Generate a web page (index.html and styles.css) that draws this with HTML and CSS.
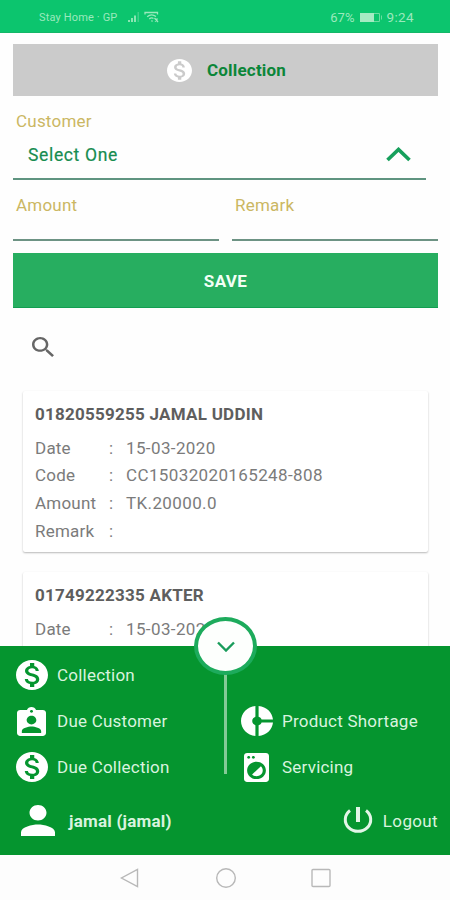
FILE: index.html
```html
<!DOCTYPE html>
<html lang="en">
<head>
<meta charset="utf-8">
<title>Collection</title>
<link rel="stylesheet" href="styles.css">
</head>
<body>
<svg class="defs" aria-hidden="true">
  <symbol id="money" viewBox="2 2 20 20" preserveAspectRatio="none"><path d="M12 2C6.480 2 2 6.480 2 12s4.480 10 10 10 10-4.480 10-10S17.520 2 12 2zm1.410 16.090V20h-2.670v-1.930c-1.710-.36-3.160-1.460-3.270-3.400h1.960c.1 1.050.82 1.870 2.650 1.870 1.960 0 2.400-.98 2.400-1.590 0-.83-.44-1.610-2.670-2.140-2.480-.6-4.180-1.620-4.180-3.670 0-1.720 1.390-2.840 3.110-3.210V4h2.670v1.950c1.860.45 2.790 1.860 2.850 3.390H14.300c-.05-1.110-.64-1.870-2.220-1.870-1.500 0-2.400.68-2.400 1.640 0 .84.65 1.390 2.670 1.910s4.180 1.390 4.180 3.910c-.01 1.830-1.380 2.830-3.120 3.160z"/></symbol>
</svg>
<header class="status">
  <span class="carrier">Stay Home · GP</span>
  <svg class="signal" viewBox="0 0 13 11"><path d="M1 8h2v2H1zM4 6h2v4H4zM7 3.500h2V10H7z"/><path class="faint" d="M10.500 0h1.500v10h-1.500z"/></svg>
  <svg class="wifi" viewBox="0 0 16 12"><path d="M1 3.500V1.500h12.500v2M3.200 5.700Q7.500 2 12 5.500M5.300 8Q7.500 6 9.500 7.500M7.500 9.500l1 1M10.500 7l3.500 4M11 10.500l2.500-3"/></svg>
  <span class="percent">67%</span>
  <svg class="battery" viewBox="0 0 24 11"><path class="fill" d="M1 1h14v9H1z"/><path class="shell" d="M15 1.500h5.500v8H15M22.500 3.500v4"/></svg>
  <span class="clock">9:24</span>
</header>
<main class="page">
  <h1 class="title"><svg class="title-icon"><use href="#money"/></svg><span>Collection</span></h1>
  <section class="form">
    <label class="label">Customer</label>
    <div class="select"><span>Select One</span><svg class="chevron-up" viewBox="0 0 25 15"><path d="M1.500 13L12.500 2.500 23.500 13"/></svg></div>
    <div class="pair">
      <div class="field"><label class="label">Amount</label></div>
      <div class="field"><label class="label">Remark</label></div>
    </div>
    <button class="save">SAVE</button>
  </section>
  <svg class="search" viewBox="3 3 17.500 17.500" preserveAspectRatio="none"><path d="M15.500 14h-.79l-.28-.27C15.410 12.590 16 11.110 16 9.500 16 5.910 13.090 3 9.500 3S3 5.910 3 9.500 5.910 16 9.500 16c1.610 0 3.090-.59 4.230-1.570l.27.28v.79l5 4.990L20.490 19l-4.990-5zm-6 0C7.010 14 5 11.990 5 9.500S7.010 5 9.500 5 14 7.010 14 9.500 11.990 14 9.500 14z"/></svg>
  <section class="list">
    <article class="card">
      <h2>01820559255 JAMAL UDDIN</h2>
      <dl>
        <dt>Date</dt><dd>15-03-2020</dd>
        <dt>Code</dt><dd>CC15032020165248-808</dd>
        <dt>Amount</dt><dd>TK.20000.0</dd>
        <dt>Remark</dt><dd></dd>
      </dl>
    </article>
    <article class="card">
      <h2>01749222335 AKTER</h2>
      <dl>
        <dt>Date</dt><dd>15-03-2020</dd>
      </dl>
    </article>
  </section>
</main>
<section class="drawer">
  <div class="divider"></div>
  <div class="toggle"><svg viewBox="0 0 18 11"><path d="M1 1.500l8 8 8-8"/></svg></div>
  <nav class="menu">
    <a class="item"><svg><use href="#money"/></svg><span>Collection</span></a>
    <a class="item"></a>
    <a class="item"><svg class="badge" viewBox="3 1 18 20" preserveAspectRatio="none"><path d="M19 3h-4.180C14.400 1.840 13.300 1 12 1c-1.300 0-2.400.84-2.820 2H5c-1.100 0-2 .9-2 2v14c0 1.100.9 2 2 2h14c1.100 0 2-.9 2-2V5c0-1.100-.9-2-2-2zm-7 0c.55 0 1 .45 1 1s-.45 1-1 1-1-.45-1-1 .45-1 1-1zm0 4c1.660 0 3 1.340 3 3s-1.340 3-3 3-3-1.340-3-3 1.340-3 3-3zm6 12H6v-1.400c0-2 4-3.100 6-3.100s6 1.100 6 3.100V19z"/></svg><span>Due Customer</span></a>
    <a class="item"><svg viewBox="2 2 20 20" preserveAspectRatio="none"><path d="M11 9.160V2c-5 .5-9 4.790-9 10s4 9.500 9 10v-7.160c-1-.41-2-1.520-2-2.840s1-2.430 2-2.840zM14.860 11H22c-.48-4.750-4-8.530-9-9v7.160c1 .3 1.520.98 1.860 1.840zM13 14.840V22c5-.47 8.520-4.250 9-9h-7.140c-.34.86-.86 1.540-1.860 1.840z"/></svg><span>Product Shortage</span></a>
    <a class="item"><svg><use href="#money"/></svg><span>Due Collection</span></a>
    <a class="item"><svg class="washer" viewBox="4 2 16 20" preserveAspectRatio="none"><path d="M9.170 16.830c1.560 1.560 4.100 1.560 5.660 0 1.560-1.560 1.560-4.100 0-5.660l-5.660 5.660zM18 2.010L6 2c-1.110 0-2 .89-2 2v16c0 1.110.89 2 2 2h12c1.110 0 2-.89 2-2V4c0-1.110-.89-1.990-2-1.990zM10 4c.55 0 1 .45 1 1s-.45 1-1 1-1-.45-1-1 .45-1 1-1zM7 4c.55 0 1 .45 1 1s-.45 1-1 1-1-.45-1-1 .45-1 1-1zm5 16c-3.310 0-6-2.690-6-6s2.690-6 6-6 6 2.690 6 6-2.690 6-6 6z"/></svg><span>Servicing</span></a>
  </nav>
  <footer class="account">
    <svg class="person" viewBox="4 4 16 16" preserveAspectRatio="none"><path d="M12 12c2.210 0 4-1.790 4-4s-1.790-4-4-4-4 1.790-4 4 1.790 4 4 4zm0 2c-2.670 0-8 1.340-8 4v2h16v-2c0-2.660-5.330-4-8-4z"/></svg>
    <strong>jamal (jamal)</strong>
    <svg class="power" viewBox="0 0 30 27"><path d="M7 3.500A12.700 11.700 0 1 0 23 3.500"/><path class="bar" d="M15 0v15"/></svg>
    <span class="logout">Logout</span>
  </footer>
</section>
<nav class="system">
  <svg viewBox="0 0 20 20"><path d="M17.500 1.500v17L1.500 10z"/></svg>
  <svg viewBox="0 0 20 20"><circle cx="10" cy="10" r="9.300"/></svg>
  <svg viewBox="0 0 20 20"><rect x="1" y="1.500" width="18" height="17" rx="1"/></svg>
</nav>
</body>
</html>
```
FILE: styles.css
```css
* { box-sizing: border-box; }
body {
  margin: 0;
  width: 450px;
  height: 900px;
  display: flex;
  flex-direction: column;
  overflow: hidden;
  background: #fefefe;
  font-family: Roboto, sans-serif;
  font-size: 17px;
  letter-spacing: 0.22px;
}
svg { display: block; flex: none; }
.defs { position: absolute; width: 0; height: 0; }

.status {
  flex: none;
  height: 33px;
  padding: 2px 36px 0 39px;
  display: flex;
  align-items: center;
  background: #0cc56e;
  border-bottom: 1px solid #14b768;
  color: #9be9bd;
  font-size: 11px;
}
.carrier { width: 88px; letter-spacing: 0.15px; white-space: nowrap; }
.signal { width: 13px; height: 11px; fill: #8be5b3; }
.signal .faint { fill: #3dd189; }
.wifi { width: 16px; height: 12px; margin-left: 4px; fill: none; stroke: #9be9bd; stroke-width: 1.300; }
.percent { margin-left: auto; font-size: 13px; letter-spacing: 0.1px; }
.battery { width: 24px; height: 11px; margin: 0 4px; }
.battery .fill { fill: #a5ebc3; }
.battery .shell { fill: none; stroke: #6bdda0; }
.clock { font-size: 13.500px; letter-spacing: 0.35px; }

.page { flex: none; height: 613px; padding: 11px 12px 0 13px; overflow: hidden; }
.title {
  margin: 0;
  height: 52px;
  display: flex;
  align-items: center;
  justify-content: center;
  gap: 15px;
  padding-left: 2px;
  background: #cbcbcb;
  color: #0b8639;
  font-size: 17px;
  font-weight: 700;
  letter-spacing: 0.2px;
}
.title-icon { width: 25px; height: 23px; fill: #fff; }
.form { display: flex; flex-direction: column; }
.label { padding-left: 3px; color: #cbb763; line-height: 20px; }
.form > .label { margin-top: 15px; }
.select {
  width: 413px;
  height: 49px;
  padding: 0 15px;
  display: flex;
  align-items: center;
  justify-content: space-between;
  border-bottom: 2px solid #5f9480;
  color: #178c50;
  font-size: 17.500px;
  letter-spacing: 0.65px;
  -webkit-text-stroke: 0.2px #178c50;
}
.chevron-up { width: 25px; height: 15px; fill: none; stroke: #17a05c; stroke-width: 3.700; }
.pair { display: flex; gap: 13px; }
.field { flex: 1; height: 61px; padding-top: 15px; border-bottom: 2px solid #6d9384; }
.save {
  height: 55px;
  margin-top: 12px;
  padding: 2px 0 0;
  border: 0;
  border-bottom: 1px solid #129e51;
  background: #27ae60;
  color: #f3fff6;
  font: 700 17px Roboto, sans-serif;
  letter-spacing: 0.35px;
}
.search { width: 22px; height: 20px; margin: 29px 0 0 19px; fill: #666; }
.list { display: flex; flex-direction: column; gap: 20px; padding: 34px 10px 0; }
.card {
  flex: none;
  height: 161px;
  padding: 12px 12px 0;
  border-radius: 2px;
  background: #fff;
  box-shadow: 0 1px 2px rgba(0, 0, 0, 0.28);
}
.card h2 { margin: 0; font-size: 17px; line-height: 22px; color: #5e5e5e; letter-spacing: 0.25px; }
.card dl { margin: 8.500px 0 0; display: grid; grid-template-columns: 74px 1fr; grid-auto-rows: 27.700px; color: #7b7b7b; line-height: 28px; }
.card dt, .card dd { margin: 0; }
.card dd { letter-spacing: 0.38px; }
.card dd::before { content: ":"; display: inline-block; width: 17px; }

.drawer { position: relative; flex: none; height: 209px; background: #05952f; color: #d9f3df; }
.toggle {
  position: absolute;
  left: 194px;
  top: -29px;
  width: 63px;
  height: 58px;
  display: flex;
  align-items: center;
  justify-content: center;
  border: 4px solid #1dab5c;
  border-radius: 50%;
  background: #fdfffd;
}
.toggle svg { width: 18px; height: 11px; fill: none; stroke: #199c5b; stroke-width: 2.400; }
.divider { position: absolute; left: 224px; top: 27px; width: 3px; height: 101px; background: #84ca96; }
.menu { display: grid; grid-template-columns: 225px 225px; grid-auto-rows: 46.200px; padding-top: 6px; }
.item { display: flex; align-items: center; gap: 9px; padding-left: 16px; white-space: nowrap; }
.item svg { width: 32px; height: 30px; fill: #fff; }
.item .badge { width: 29px; height: 29px; margin: 0 2px 0 1px; }
.item .washer { width: 25px; height: 29px; margin: 0 4px 0 3px; }
.account { display: flex; align-items: center; height: 46px; margin-top: 7px; padding: 0 12px 0 21px; }
.person { width: 34px; height: 31px; margin-bottom: 1px; fill: #fff; }
.account strong { margin-left: 14px; }
.power { width: 30px; height: 27px; margin-left: auto; fill: none; stroke: #e2f6e7; stroke-width: 3; }
.power .bar { stroke-width: 4; }
.logout { margin-left: 10px; letter-spacing: 0.35px; }

.system { flex: none; height: 45px; display: flex; justify-content: center; align-items: center; gap: 75.500px; padding-left: 1px; background: #fdfdfd; }
.system svg { width: 20px; height: 20px; fill: none; stroke: #b8b8b8; stroke-width: 1.400; }
```
